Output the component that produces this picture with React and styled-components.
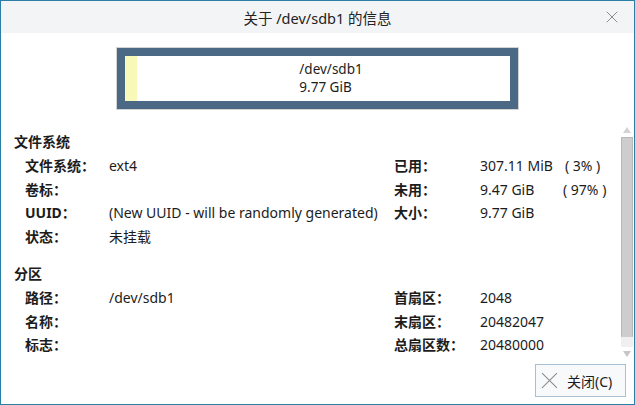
import React from 'react';
import styled, { createGlobalStyle } from 'styled-components';

const Global = createGlobalStyle`
  html, body { margin: 0; padding: 0; background: #ffffff; }
  body {
    font-family: "Noto Sans", "Noto Sans CJK SC", sans-serif;
    color: #1c1c1c;
  }
`

const Window = styled.div`
  box-sizing: border-box;
  width: 635px;
  height: 405px;
  border: 1px solid #2a7fa6;
  display: flex;
  flex-direction: column;
  background: #ffffff;
`

const TitleBar = styled.div`
  height: 32px;
  flex: none;
  background: #f3f4f6;
  display: flex;
  align-items: center;
  justify-content: center;
  position: relative;
  font-size: 14.5px;
  color: #222;
`

const CloseX = styled.div`
  position: absolute;
  right: 16px;
  top: 10px;
  width: 12px;
  height: 12px;
  display: flex;
`

const Body = styled.div`
  flex: 1;
  display: flex;
  flex-direction: column;
`

const DiskRow = styled.div`
  display: flex;
  justify-content: center;
  padding-top: 14px;
  padding-right: 1px;
`

const DiskFrame = styled.div`
  box-sizing: border-box;
  width: 403px;
  height: 63px;
  border: 1px solid #d3d3d3;
  background: #4b6984;
  padding: 8px;
  display: flex;
`

const DiskInner = styled.div`
  flex: 1;
  background: #ffffff;
  display: flex;
`

const UsedBand = styled.div`
  width: 12px;
  background: #f8f8b9;
`

const DiskLabel = styled.div`
  flex: 1;
  display: flex;
  justify-content: center;
  align-items: center;
  padding-left: 16px;
  font-size: 13.5px;
  line-height: 18.5px;
`

const DiskText = styled.div`
  display: flex;
  flex-direction: column;
  margin-top: -1px;
`

const ScrollArea = styled.div`
  display: flex;
  margin-top: 13px;
  height: 234px;
`

const Content = styled.div`
  flex: 1;
  padding: 9px 0 0 13px;
`

const Section = styled.div`
  margin-bottom: 16px;
`

const Heading = styled.div`
  font-weight: 700;
  font-size: 14px;
  line-height: 20px;
`

const Grid = styled.div`
  display: grid;
  grid-template-columns: 84px 285px 86px 83px auto;
  padding-left: 11px;
  margin-top: 2px;
  font-size: 14px;
`

const Label = styled.div`
  font-weight: 700;
  line-height: 23.5px;
  white-space: nowrap;
`

const Value = styled.div`
  line-height: 23.5px;
  white-space: nowrap;
  padding-left: ${p => p.$shift || 0}px;
`

const Scrollbar = styled.div`
  width: 13px;
  margin-right: 1px;
  display: flex;
  flex-direction: column;
  align-items: center;
`

const Arrow = styled.div`
  width: 0;
  height: 0;
  border-left: 4px solid transparent;
  border-right: 4px solid transparent;
  ${p => p.$down
    ? 'border-top: 6px solid #c6c6c6; margin-top: 4px;'
    : 'border-bottom: 6px solid #d2d2d2; margin-top: 4px;'}
`

const Thumb = styled.div`
  box-sizing: border-box;
  width: 12px;
  flex: 1;
  margin-top: 4px;
  background: #cdcdcd;
  border: 1px solid #b8b8b8;
  border-bottom-color: #cdcdcd;
`

const Track = styled.div`
  width: 12px;
  height: 10px;
  background: #f0f0f0;
`

const Footer = styled.div`
  flex: 1;
  display: flex;
  justify-content: flex-end;
  align-items: flex-start;
  padding: 7px 8px 0 0;
`

const Button = styled.button`
  box-sizing: border-box;
  width: 91px;
  height: 33px;
  border: 1px solid #a7c0d4;
  background: #f8f9fb;
  display: flex;
  align-items: center;
  gap: 9px;
  padding: 0 0 0 5px;
  font-family: inherit;
  font-size: 14px;
  color: #1c1c1c;
`

function XIcon({ size, color, width }) {
  return (
    <svg width={size} height={size} viewBox="0 0 16 16">
      <path d="M1 1 L15 15 M15 1 L1 15" stroke={color} strokeWidth={width} fill="none" />
    </svg>
  );
}

function InfoRow({ label, value, label2, value2, extra, shift }) {
  return (
    <>
      <Label>{label}</Label>
      <Value>{value}</Value>
      <Label>{label2}</Label>
      <Value>{value2}</Value>
      <Value $shift={shift}>{extra}</Value>
    </>
  );
}

export default function App() {
  return (
    <>
      <Global />
      <Window>
        <TitleBar>
          关于 /dev/sdb1 的信息
          <CloseX><XIcon size={12} color="#8a8a8a" width={1.3} /></CloseX>
        </TitleBar>
        <Body>
          <DiskRow>
            <DiskFrame>
              <DiskInner>
                <UsedBand />
                <DiskLabel>
                  <DiskText>
                    <span>/dev/sdb1</span>
                    <span>9.77 GiB</span>
                  </DiskText>
                </DiskLabel>
              </DiskInner>
            </DiskFrame>
          </DiskRow>
          <ScrollArea>
            <Content>
              <Section>
                <Heading>文件系统</Heading>
                <Grid>
                  <InfoRow label="文件系统：" value="ext4" label2="已用：" value2="307.11 MiB" extra="( 3% )" shift={2} />
                  <InfoRow label="卷标：" value="" label2="未用：" value2="9.47 GiB" extra="( 97% )" />
                  <InfoRow label="UUID：" value="(New UUID - will be randomly generated)" label2="大小：" value2="9.77 GiB" extra="" />
                  <InfoRow label="状态：" value="未挂载" label2="" value2="" extra="" />
                </Grid>
              </Section>
              <Section>
                <Heading>分区</Heading>
                <Grid>
                  <InfoRow label="路径：" value="/dev/sdb1" label2="首扇区：" value2="2048" extra="" />
                  <InfoRow label="名称：" value="" label2="末扇区：" value2="20482047" extra="" />
                  <InfoRow label="标志：" value="" label2="总扇区数：" value2="20480000" extra="" />
                </Grid>
              </Section>
            </Content>
            <Scrollbar>
              <Arrow />
              <Thumb />
              <Track />
              <Arrow $down />
            </Scrollbar>
          </ScrollArea>
          <Footer>
            <Button>
              <XIcon size={17} color="#8c8c8c" width={1} />
              关闭(C)
            </Button>
          </Footer>
        </Body>
      </Window>
    </>
  );
}
